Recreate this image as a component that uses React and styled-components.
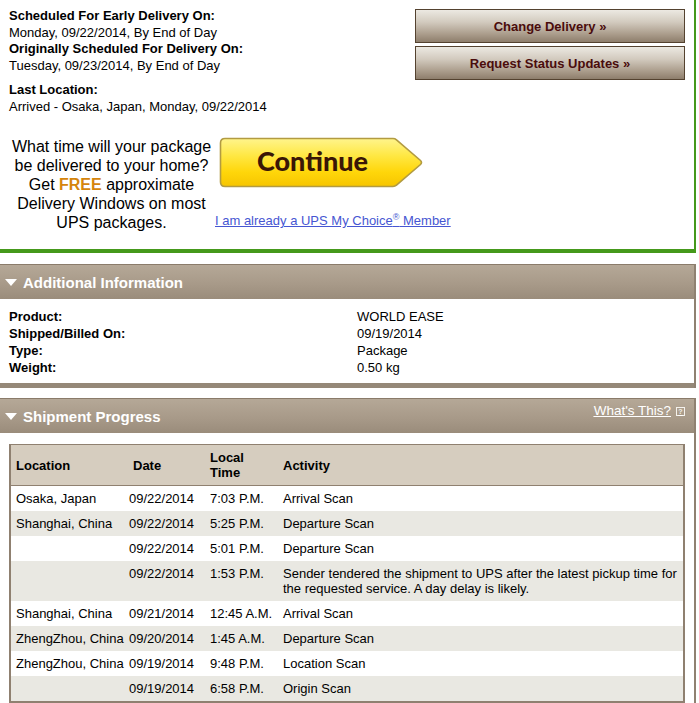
import React from 'react';
import styled, { createGlobalStyle } from 'styled-components';

const GlobalStyle = createGlobalStyle`
  html, body { margin: 0; padding: 0; background: #fff; }
  body {
    font-family: "Liberation Sans", Arial, Helvetica, sans-serif;
    font-size: 13px;
    color: #000;
  }
`;

const Page = styled.div`
  width: 696px;
`;

/* ---------- top delivery section ---------- */
const TopSection = styled.section`
  border-right: 2px solid #45991b;
  border-bottom: 4px solid #45991b;
  padding-bottom: 17px;
`;

const InfoRow = styled.div`
  display: flex;
  justify-content: space-between;
  align-items: flex-start;
`;

const InfoText = styled.div`
  padding: 8px 0 0 9px;
  line-height: 16.5px;
`;

const InfoLabel = styled.div`
  font-weight: bold;
  margin-top: ${(p) => (p.$gap ? '8px' : '0')};
`;

const InfoValue = styled.div``;

const ButtonStack = styled.div`
  display: flex;
  flex-direction: column;
  gap: 3px;
  width: 270px;
  padding-top: 9px;
  margin-right: 9px;
`;

const ActionButton = styled.button`
  height: 34px;
  border: 1px solid #54422f;
  background: linear-gradient(to bottom, #ece9e2 0%, #d2cabe 38%, #ab9d8c 75%, #8e7e6c 100%);
  font-family: "Liberation Sans", Arial, sans-serif;
  font-weight: bold;
  font-size: 13px;
  color: #4a0c0c;
  cursor: pointer;
  padding: 0;
`;

const PromoRow = styled.div`
  display: flex;
  align-items: flex-start;
  margin-top: 22px;
`;

const PromoText = styled.p`
  margin: 0 0 0 8px;
  width: 207px;
  text-align: center;
  font-size: 16px;
  line-height: 19px;
`;

const Free = styled.strong`
  color: #d5850c;
`;

const MemberColumn = styled.div`
  display: flex;
  flex-direction: column;
  align-items: flex-start;
`;

const ContinueButton = styled.button`
  position: relative;
  width: 205px;
  height: 51px;
  margin-left: 4px;
  padding: 0 0 0 38px;
  border: 0;
  background: none;
  display: flex;
  align-items: center;
  cursor: pointer;
  font-family: Lato, "Open Sans", sans-serif;
  font-weight: 900;
  font-size: 27px;
  color: #3a1606;
`;

const ButtonShape = styled.svg`
  position: absolute;
  left: 0;
  top: 0;
`;

const ButtonLabel = styled.span`
  position: relative;
  line-height: 1;
  margin-top: -5px;
`;

const MemberLink = styled.a`
  margin-top: 25px;
  font-size: 13px;
  line-height: 15px;
  color: #4656d2;
  text-decoration: underline;
  sup {
    font-size: 9px;
    line-height: 0;
    vertical-align: 5px;
  }
`;

/* ---------- collapsible panels ---------- */
const Panel = styled.section`
  margin-top: ${(p) => p.$mt}px;
  border-right: 2px solid #8f8171;
`;

const PanelHeader = styled.div`
  height: 34px;
  border-top: 1px solid #8a7b6a;
  background: linear-gradient(to bottom, #b5a897 0%, #a89a89 55%, #9a8c7b 100%);
  display: flex;
  justify-content: space-between;
  align-items: center;
  padding: 0 9px 0 5px;
  color: #fff;
`;

const PanelTitle = styled.h2`
  margin: 0;
  display: flex;
  align-items: center;
  gap: 6px;
  font-size: 15px;
  font-weight: bold;
`;

const Caret = styled.span`
  width: 0;
  height: 0;
  border-left: 6.5px solid transparent;
  border-right: 6.5px solid transparent;
  border-top: 7px solid #fff;
`;

const HelpLink = styled.a`
  align-self: flex-start;
  margin-top: 4px;
  display: flex;
  align-items: center;
  gap: 5px;
  font-size: 13.5px;
  line-height: 16px;
  color: #fff;
  span {
    text-decoration: underline;
  }
`;

const HelpIcon = styled.i`
  display: inline-flex;
  align-items: center;
  justify-content: center;
  width: 7px;
  height: 7px;
  border: 1px solid #f4f1ec;
  font-style: normal;
  font-size: 7px;
  line-height: 7px;
  font-weight: bold;
  color: #f4f1ec;
`;

const DetailsBody = styled.div`
  background: #fff;
  padding: 9px 9px 7px;
  border-bottom: 5px solid #958878;
  display: grid;
  grid-template-columns: 348px 1fr;
  line-height: 17px;
`;

const DetailLabel = styled.div`
  font-weight: bold;
`;

const DetailValue = styled.div``;

const ProgressBody = styled.div`
  background: #fff;
  padding: 11px 9px 12px;
`;

const ProgressTable = styled.table`
  width: 100%;
  table-layout: fixed;
  border-collapse: separate;
  border-spacing: 0;
  border: 2px solid #8f8070;
  border-top-width: 1px;
`;

const HeadCell = styled.th`
  background: #d6cdbf;
  border-bottom: 1px solid #8f8070;
  padding: 5px 0 5px ${(p) => p.$pl || 6}px;
  text-align: left;
  vertical-align: middle;
  font-weight: bold;
  font-size: 13px;
  line-height: 15px;
`;

const Row = styled.tr`
  background: ${(p) => (p.$alt ? '#e9e8e2' : '#fff')};
`;

const Cell = styled.td`
  padding: 5px 0 5px ${(p) => p.$pl || 6}px;
  vertical-align: top;
  line-height: 15px;
  font-size: 13px;
  white-space: ${(p) => (p.$wrap ? 'normal' : 'nowrap')};
`;

const rows = [
  ['Osaka, Japan', '09/22/2014', '7:03 P.M.', 'Arrival Scan'],
  ['Shanghai, China', '09/22/2014', '5:25 P.M.', 'Departure Scan'],
  ['', '09/22/2014', '5:01 P.M.', 'Departure Scan'],
  ['', '09/22/2014', '1:53 P.M.', 'Sender tendered the shipment to UPS after the latest pickup time for the requested service. A day delay is likely.'],
  ['Shanghai, China', '09/21/2014', '12:45 A.M.', 'Arrival Scan'],
  ['ZhengZhou, China', '09/20/2014', '1:45 A.M.', 'Departure Scan'],
  ['ZhengZhou, China', '09/19/2014', '9:48 P.M.', 'Location Scan'],
  ['', '09/19/2014', '6:58 P.M.', 'Origin Scan'],
];

const details = [
  ['Product:', 'WORLD EASE'],
  ['Shipped/Billed On:', '09/19/2014'],
  ['Type:', 'Package'],
  ['Weight:', '0.50 kg'],
];

export default function App() {
  return (
    <Page>
      <GlobalStyle />
      <TopSection>
        <InfoRow>
          <InfoText>
            <InfoLabel>Scheduled For Early Delivery On:</InfoLabel>
            <InfoValue>Monday, 09/22/2014, By End of Day</InfoValue>
            <InfoLabel>Originally Scheduled For Delivery On:</InfoLabel>
            <InfoValue>Tuesday, 09/23/2014, By End of Day</InfoValue>
            <InfoLabel $gap>Last Location:</InfoLabel>
            <InfoValue>Arrived - Osaka, Japan, Monday, 09/22/2014</InfoValue>
          </InfoText>
          <ButtonStack>
            <ActionButton>Change Delivery »</ActionButton>
            <ActionButton>Request Status Updates »</ActionButton>
          </ButtonStack>
        </InfoRow>
        <PromoRow>
          <PromoText>
            What time will your package<br />
            be delivered to your home?<br />
            Get <Free>FREE</Free> approximate<br />
            Delivery Windows on most<br />
            UPS packages.
          </PromoText>
          <MemberColumn>
            <ContinueButton>
              <ButtonShape width="205" height="51" viewBox="0 0 205 51">
                <defs>
                  <linearGradient id="cg" x1="0" y1="0" x2="0" y2="1">
                    <stop offset="0" stopColor="#fff48c" />
                    <stop offset="0.35" stopColor="#ffe845" />
                    <stop offset="0.7" stopColor="#ffd60a" />
                    <stop offset="1" stopColor="#f6c500" />
                  </linearGradient>
                </defs>
                <path
                  d="M6 1.5 H174 Q176 1.5 177.5 2.8 L201.5 23.5 Q203.5 25.5 201.5 27.5 L177.5 48.2 Q176 49.5 174 49.5 H6 Q1.5 49.5 1.5 45 V6 Q1.5 1.5 6 1.5 Z"
                  fill="url(#cg)"
                  stroke="#b29b42"
                  strokeWidth="1.6"
                />
              </ButtonShape>
              <ButtonLabel>Continue</ButtonLabel>
            </ContinueButton>
            <MemberLink href="#">
              I am already a UPS My Choice<sup>®</sup> Member
            </MemberLink>
          </MemberColumn>
        </PromoRow>
      </TopSection>

      <Panel $mt={11}>
        <PanelHeader>
          <PanelTitle>
            <Caret />
            Additional Information
          </PanelTitle>
        </PanelHeader>
        <DetailsBody>
          {details.map(([k, v]) => (
            <React.Fragment key={k}>
              <DetailLabel>{k}</DetailLabel>
              <DetailValue>{v}</DetailValue>
            </React.Fragment>
          ))}
        </DetailsBody>
      </Panel>

      <Panel $mt={10}>
        <PanelHeader>
          <PanelTitle>
            <Caret />
            Shipment Progress
          </PanelTitle>
          <HelpLink href="#">
            <span>What's This?</span>
            <HelpIcon>?</HelpIcon>
          </HelpLink>
        </PanelHeader>
        <ProgressBody>
          <ProgressTable>
            <colgroup>
              <col style={{ width: 114 }} />
              <col style={{ width: 79 }} />
              <col style={{ width: 73 }} />
              <col />
            </colgroup>
            <thead>
              <tr>
                <HeadCell $pl={5}>Location</HeadCell>
                <HeadCell $pl={8}>Date</HeadCell>
                <HeadCell>Local<br />Time</HeadCell>
                <HeadCell>Activity</HeadCell>
              </tr>
            </thead>
            <tbody>
              {rows.map((r, i) => (
                <Row key={i} $alt={i % 2 === 1}>
                  <Cell $pl={5}>{r[0]}</Cell>
                  <Cell $pl={4}>{r[1]}</Cell>
                  <Cell>{r[2]}</Cell>
                  <Cell $wrap>{r[3]}</Cell>
                </Row>
              ))}
            </tbody>
          </ProgressTable>
        </ProgressBody>
      </Panel>
    </Page>
  );
}
